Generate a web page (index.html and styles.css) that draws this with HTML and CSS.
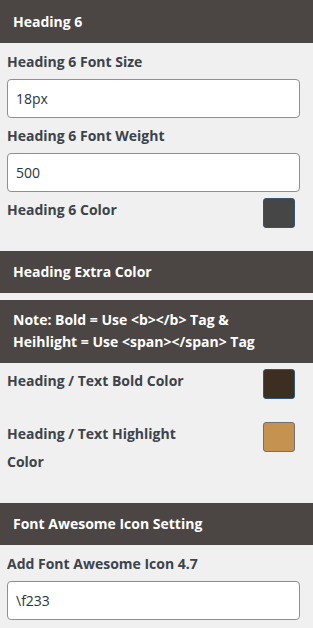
FILE: index.html
```html
<!DOCTYPE html>
<html lang="en">
<head>
  <meta charset="UTF-8">
  <meta name="viewport" content="width=device-width, initial-scale=1.0">
  <title>Heading Settings</title>
  <link rel="stylesheet" href="styles.css">
</head>
<body>
  <div class="bar">Heading 6</div>
  <div class="field">
    <label for="h6size">Heading 6 Font Size</label>
    <input type="text" id="h6size" value="18px">
  </div>
  <div class="field">
    <label for="h6weight">Heading 6 Font Weight</label>
    <input type="text" id="h6weight" value="500">
  </div>
  <div class="color-row first">
    <label>Heading 6 Color</label>
    <span class="swatch active" style="background-color: #464646;"></span>
  </div>

  <div class="bar">Heading Extra Color</div>
  <div class="bar note">
    Note: Bold = Use &lt;b&gt;&lt;/b&gt; Tag &amp;<br>
    Heihlight = Use &lt;span&gt;&lt;/span&gt; Tag
  </div>
  <div class="color-row">
    <label>Heading / Text Bold Color</label>
    <span class="swatch active" style="background-color: #3d2e22;"></span>
  </div>
  <div class="color-row spaced">
    <label>Heading / Text Highlight Color</label>
    <span class="swatch" style="background-color: #c5934f;"></span>
  </div>

  <div class="bar">Font Awesome Icon Setting</div>
  <div class="field">
    <label for="faicon">Add Font Awesome Icon 4.7</label>
    <input type="text" id="faicon" value="\f233">
  </div>
</body>
</html>
```

FILE: styles.css
```css
body {
  margin: 0;
  background-color: #f0f0f1;
  font-family: 'Open Sans', 'Noto Sans', sans-serif;
  color: #3c434a;
}
.bar {
  background-color: #4b4643;
  color: #fff;
  font-weight: bold;
  font-size: 14px;
  height: 42px;
  line-height: 42px;
  padding: 0 13px;
  margin-top: 24px;
}
.bar:first-child {
  margin-top: 0;
  height: 43px;
  line-height: 43px;
}
.bar.note {
  margin-top: 7px;
  height: auto;
  line-height: 22px;
  padding: 9px 13px 10px;
}
.field {
  padding: 0 13px 0 7px;
}
.field label {
  display: block;
  font-weight: bold;
  font-size: 14px;
  line-height: 22px;
  margin-top: 8px;
}
.field + .field label {
  margin-top: 7px;
}
.field input {
  display: block;
  box-sizing: border-box;
  width: 100%;
  height: 39px;
  margin-top: 6px;
  padding: 0 8px;
  border: 1px solid #8c8f94;
  border-radius: 4px;
  background-color: #fff;
  color: #2c3338;
  font-family: 'Open Sans', 'Noto Sans', sans-serif;
  font-size: 14px;
}
.color-row {
  display: flex;
  justify-content: space-between;
  align-items: flex-start;
  padding: 0 18px 0 7px;
  margin-top: 4px;
}
.color-row + .bar {
  margin-top: 23px;
}
.color-row.spaced {
  margin-top: 21px;
}
.color-row.spaced + .bar {
  margin-top: 27px;
}
.color-row label {
  width: 200px;
  font-weight: bold;
  font-size: 14px;
  line-height: 28px;
}
.swatch {
  box-sizing: border-box;
  width: 32px;
  height: 30px;
  margin-top: 2px;
  border: 1px solid #6b7278;
  border-radius: 3px;
}
.swatch.active {
  border-color: #2f5676;
}
.bar.note + .color-row {
  margin-top: 4px;
}
```
